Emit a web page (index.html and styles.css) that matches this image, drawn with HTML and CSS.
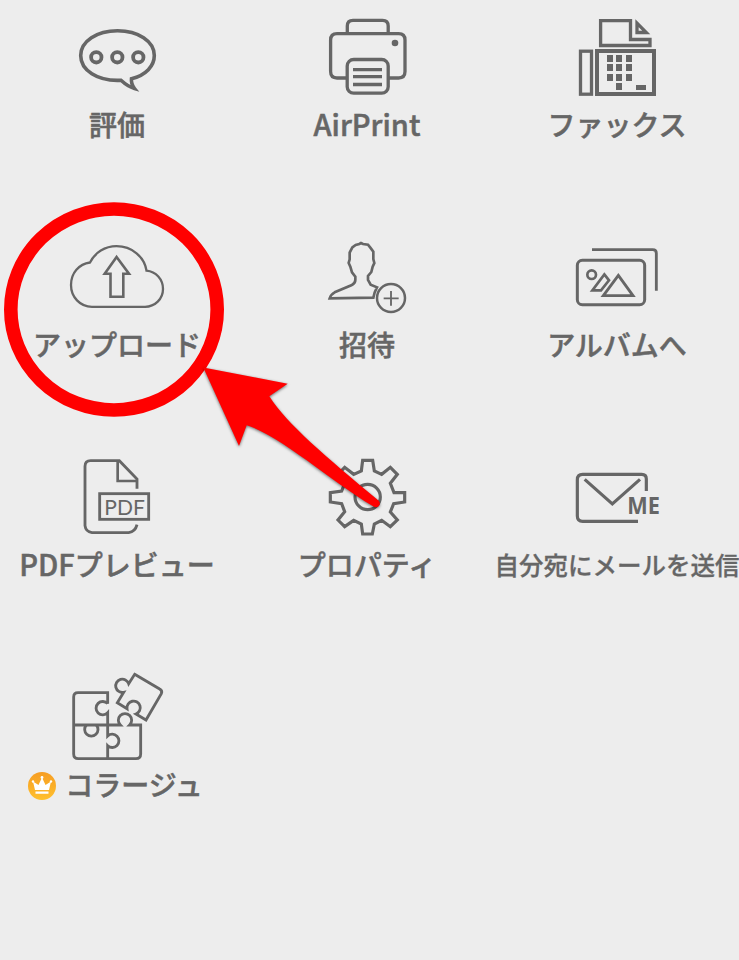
FILE: index.html
```
<!DOCTYPE html>
<html lang="ja">
<head>
    <meta charset="UTF-8">
    <meta name="viewport" content="width=device-width, initial-scale=1.0">
    <title>メニュー</title>
    <link rel="stylesheet" href="styles.css">
</head>
<body>
    <div class="menu">
        <div class="item">
            <svg class="icon" viewBox="67 5 100 100">
                <path stroke-width="3.6" d="M121 80.300C97 81.500 80.700 70 80.700 55.500C80.700 41 97 30.700 117.500 30.700C138 30.700 154.300 41 154.300 55.500C154.300 66 146 75 131.500 78.800C131 83 132.500 86 134.500 88.500C129 87 125 84 121 80.300z"/>
                <g stroke-width="3.800"><circle cx="96.300" cy="57.300" r="5.200"/><circle cx="117.300" cy="57.300" r="5.200"/><circle cx="138.300" cy="57.300" r="5.200"/></g>
            </svg>
            <div class="label">評価</div>
        </div>
        <div class="item">
            <svg class="icon" viewBox="317 5 100 100">
                <path d="M347.300 33V26q0-5.700 5.700-5.700H382.500q5.700 0 5.700 5.700V33"/>
                <path d="M347 78H337q-6.400 0-6.400-6.400V40q0-6.400 6.400-6.400H398.600q6.400 0 6.400 6.400V71.600q0 6.400-6.400 6.400H389"/>
                <rect x="347.200" y="59.500" width="41" height="33.700" rx="6.500"/>
                <path d="M353 69.700H382M353 76.600H382M353 84.500H382"/>
                <circle class="fill" cx="395" cy="43" r="3.300"/>
            </svg>
            <div class="label"><span class="latin">AirPrint</span></div>
        </div>
        <div class="item">
            <svg class="icon" viewBox="567 5 100 100">
                <path d="M600.600 20.600H630.500V39.500H650V45.500H600.600z"/>
                <path d="M637 23.200L646.300 32.500H637z"/>
                <rect x="580.500" y="51.200" width="11" height="43"/>
                <rect x="597" y="51" width="57" height="43" stroke-width="4"/>
                <path class="fill" d="M607 55h6v7h-6zM616 55h6v7h-6zM626 55h6v7h-6zM607 64h6v7h-6zM616 64h6v7h-6zM626 64h6v7h-6zM607 74h6v7h-6zM616 74h6v7h-6zM626 74h6v7h-6zM616 83h6v7h-6zM636 85h10v5h-10z"/>
            </svg>
            <div class="label">ファックス</div>
        </div>

        <div class="item">
            <svg class="icon" viewBox="67 225 100 100">
                <path stroke-width="2.300" d="M92 306.800C80 306.800 71 297 71 285C71 273 79 264 90 262.500C95 252.500 105 246.200 116.500 246.200C132 246.200 144.500 257 146.500 270.700C156 271.500 163 279.500 163 289C163 299 155 306.800 145 306.800z"/>
                <path stroke-width="2.600" d="M116.600 257L129 273.800H123.300V296.700H110.500V273.800H104.700z"/>
            </svg>
            <div class="label">アップロード</div>
        </div>
        <div class="item">
            <svg class="icon" viewBox="81 15 300 300">
                <path stroke-width="8" d="M119 235C122 226 126 221 134 217L184 196Q196 190 196 180V170L186 157L181 140L176 129L179 118V98L187 82L197 75L208 72L213 69L219 72L234 74L241 83L250 95V117L253 129L248 140L244 156L234 168V180L242 194L261 202Q253 216 250 233z"/>
                <circle stroke-width="7.500" cx="303" cy="234" r="42"/>
                <path stroke-width="5.500" d="M281 235H326M303 213V257"/>
            </svg>
            <div class="label">招待</div>
        </div>
        <div class="item">
            <svg class="icon" viewBox="111 15 300 300">
                <path stroke-width="8.500" d="M186 89H368Q379 89 379 100V212"/>
                <rect stroke-width="9" x="142" y="121" width="202" height="133" rx="15"/>
                <circle stroke-width="8" cx="185" cy="164" r="13"/>
                <path stroke-width="8" d="M223 163L237 181L213 211H187z"/>
                <path stroke-width="8.500" d="M265 166L309 227H220z"/>
            </svg>
            <div class="label">アルバムへ</div>
        </div>

        <div class="item">
            <svg class="icon" viewBox="201 15 300 300">
                <path stroke-width="8.500" d="M411 146V117L358 62H272Q255 62 255 79V257Q257 275 276 278H386Q406 275 411 254"/>
                <path stroke-width="8" d="M353 62V123H411"/>
                <rect stroke-width="8.500" x="299" y="161" width="147" height="77"/>
                <text class="pdf" x="313" y="225" textLength="122">PDF</text>
            </svg>
            <div class="label"><span class="latin">PDF</span>プレビュー</div>
        </div>
        <div class="item">
            <svg class="icon" viewBox="381 285 300 300">
                <path stroke-width="9.500" d="M518 331H548L553 363L575 373L601 352L622 373L601 400L612 428L644 428V456L611 461L601 486L622 510L601 530L575 511L553 522L547 552H518L514 522L491 511L464 530L444 510L464 485L455 461L421 456V428L455 423L464 400L444 373L464 352L491 373L514 363z"/>
                <circle stroke-width="9.500" cx="533" cy="441" r="38"/>
            </svg>
            <div class="label">プロパティ</div>
        </div>
        <div class="item">
            <svg class="icon" viewBox="261 -15 300 300">
                <path stroke-width="9.500" d="M499 123V87Q499 73 485 73H308Q292 73 292 89V198Q292 214 308 214H474"/>
                <path stroke-width="9.500" d="M314 88L397 162L480 88"/>
                <text class="me" x="442" y="191" textLength="98" lengthAdjust="spacingAndGlyphs">ME</text>
            </svg>
            <div class="label small">自分宛にメールを送信</div>
        </div>

        <div class="item">
            <svg class="icon" viewBox="171 15 300 300">
                <g stroke-width="8.500">
                    <path d="M293 131V98H204Q191 98 191 111V282Q191 296 205 296H378Q392 296 392 282V195H359A20 20 0 1 0 331 195H191"/>
                    <path d="M293 131A20 20 0 1 0 293 158V228A20 20 0 1 1 293 257V296"/>
                    <path d="M229 195A20 20 0 1 0 259 195"/>
                    <path d="M374 43L449 87Q458 92 454 101L408 180L378 162A20 20 0 1 0 351 146L322 128L341 97A20 20 0 1 1 356 71z"/>
                </g>
            </svg>
            <div class="label premium">
                <svg class="crown" viewBox="0 0 28 28">
                    <defs>
                        <linearGradient id="gold" x1="0" y1="0" x2="0" y2="1">
                            <stop offset="0" stop-color="#f69d23"/>
                            <stop offset="1" stop-color="#ffc02d"/>
                        </linearGradient>
                    </defs>
                    <circle cx="14" cy="14" r="14" fill="url(#gold)"/>
                    <path fill="#fff" d="M7 18L5 9.500L10.500 13L14 5.500L17.500 13L23 9.500L21 18zM7.500 19.500h13v2.300h-13z"/>
                    <g fill="#fff"><circle cx="5" cy="9.500" r="1.200"/><circle cx="14" cy="5.500" r="1.400"/><circle cx="23" cy="9.500" r="1.200"/></g>
                </svg>
                <span>コラージュ</span>
            </div>
        </div>
    </div>

    <!-- circle and arrow pointing at upload -->
    <svg class="marker" viewBox="0 0 739 960">
        <ellipse cx="114" cy="309.500" rx="103.200" ry="100.500"/>
        <path d="M203.300 367.500L287.700 383.700L269.300 396.300C288 425 325 456 378.500 500.500C382 504 378 509 373.500 506.500C329 480 281 436 246.700 425.300L239 446z"/>
    </svg>
</body>
</html>
```
FILE: styles.css
```
body{
    margin: 0;
    height: 960px;
    overflow: hidden;
    position: relative;
    background-color: #ededed;
    color: #666;
    font-family: "Noto Sans CJK JP", sans-serif;
}
.menu{
    display: grid;
    grid-template-columns: repeat(3, 250px);
    grid-auto-rows: 220px;
    margin-left: -8px;
}
.item{
    display: flex;
    flex-direction: column;
    align-items: center;
    padding-top: 5px;
}
.icon{
    width: 100px;
    height: 100px;
    fill: none;
    stroke: #666;
    stroke-width: 3.3;
}
.icon .fill{
    fill: #666;
    stroke: none;
}
.icon text{
    fill: #666;
    stroke: none;
}
.pdf{
    font-family: Lato, sans-serif;
    font-size: 63px;
    font-weight: 400;
}
.me{
    font-family: "Noto Sans", sans-serif;
    font-size: 69px;
    font-weight: 700;
}
.label{
    font-size: 28px;
    font-weight: 500;
    line-height: 38px;
    white-space: nowrap;
    -webkit-text-stroke: 0.5px #666;
}
.latin{
    font-size: 29px;
    line-height: 1;
}
.small{
    font-size: 24.5px;
    line-height: 40px;
    -webkit-text-stroke: 0.3px #666;
}
.premium{
    display: flex;
    align-items: center;
    gap: 9px;
    margin-left: -3px;
}
.crown{
    width: 28px;
    height: 28px;
    margin-top: 3px;
}
.marker{
    position: absolute;
    top: 0;
    left: 0;
    width: 739px;
    height: 960px;
}
.marker ellipse{
    fill: none;
    stroke: #f00;
    stroke-width: 13.6;
}
.marker path{
    fill: #f00;
    filter: drop-shadow(0 1.5px 1.5px rgba(0, 0, 0, 0.55));
}
```
